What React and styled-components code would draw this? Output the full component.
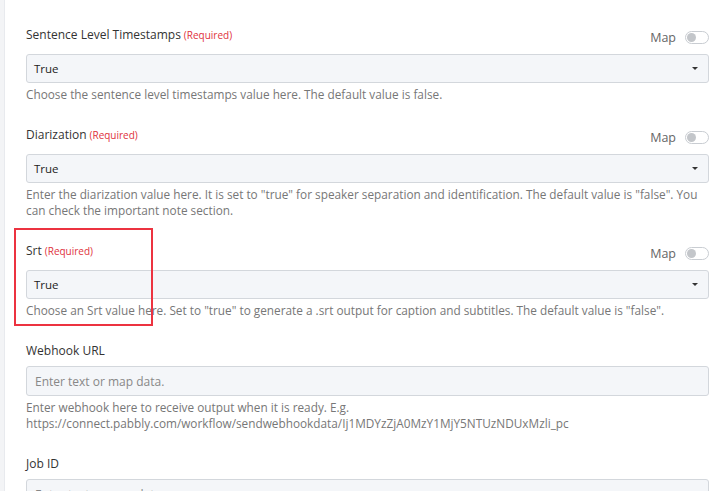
import React from "react";
import styled, { createGlobalStyle } from "styled-components";

const Global = createGlobalStyle`
  html, body { margin: 0; padding: 0; background: #fff; }
  body { font-family: "Open Sans", "Noto Sans", sans-serif; color: #333; }
`;

const Page = styled.div`
  display: flex;
  min-height: 491px;
`;

const SideRail = styled.div`
  width: 4px;
  flex: none;
  background: #f3f4f6;
  border-right: 1px solid #e8eaee;
`;

const Form = styled.div`
  flex: 1;
  padding: 26px 1px 0 21px;
  display: flex;
  flex-direction: column;
  gap: 24px;
`;

const Field = styled.div`
  position: relative;
  display: flex;
  flex-direction: column;
`;

const LabelRow = styled.div`
  display: flex;
  justify-content: space-between;
  align-items: flex-start;
  height: ${(p) => (p.$withMap ? "28px" : "24px")};
`;

const Label = styled.div`
  font-size: 12px;
  line-height: 18px;
  color: #333;
`;

const Required = styled.span`
  font-size: 10px;
  color: #e0323c;
  margin-left: 3px;
`;

const MapToggle = styled.div`
  display: flex;
  align-items: center;
  gap: 9px;
  margin-top: 3px;
  font-size: 12.5px;
  color: #666;
`;

const Switch = styled.span`
  position: relative;
  width: 22px;
  height: 11px;
  border: 1px solid #c9cdd2;
  border-radius: 7px;
  background: #fff;
  &::after {
    content: "";
    position: absolute;
    left: 1px;
    top: 1px;
    width: 9px;
    height: 9px;
    border-radius: 50%;
    background: #c3c6ca;
  }
`;

const Select = styled.div`
  display: flex;
  align-items: center;
  justify-content: space-between;
  height: 27px;
  padding: 0 10px 0 7px;
  background: #f4f6f9;
  border: 1px solid #d3d7dc;
  border-radius: 3px;
  font-size: 11.5px;
  color: #222;
`;

const Caret = styled.span`
  width: 0;
  height: 0;
  border-left: 3px solid transparent;
  border-right: 3px solid transparent;
  border-top: 3px solid #333;
`;

const TextInput = styled.div`
  display: flex;
  align-items: center;
  height: 28px;
  padding: 0 8px;
  background: #f4f6f9;
  border: 1px solid #d3d7dc;
  border-radius: 3px;
  font-size: 12px;
  color: #888;
`;

const Help = styled.div`
  margin-top: 3px;
  font-size: 11.8px;
  line-height: 16px;
  color: #777;
  padding-right: 4px;
  overflow-wrap: break-word;
`;

const Highlight = styled.div`
  position: absolute;
  left: -12px;
  top: -14px;
  width: 135px;
  height: 94px;
  border: 2px solid #ec3340;
  pointer-events: none;
`;

const SelectField = ({ label, help, highlight }) => (
  <Field>
    {highlight && <Highlight />}
    <LabelRow $withMap>
      <Label>
        {label}
        <Required>(Required)</Required>
      </Label>
      <MapToggle>
        Map
        <Switch />
      </MapToggle>
    </LabelRow>
    <Select>
      True
      <Caret />
    </Select>
    <Help>{help}</Help>
  </Field>
);

const InputField = ({ label, help }) => (
  <Field>
    <LabelRow>
      <Label>{label}</Label>
    </LabelRow>
    <TextInput>Enter text or map data.</TextInput>
    {help && <Help>{help}</Help>}
  </Field>
);

export default function App() {
  return (
    <>
      <Global />
      <Page>
        <SideRail />
        <Form>
          <SelectField
            label="Sentence Level Timestamps"
            help="Choose the sentence level timestamps value here. The default value is false."
          />
          <SelectField
            label="Diarization"
            help={
              'Enter the diarization value here. It is set to "true" for speaker separation and identification. The default value is "false". You can check the important note section.'
            }
          />
          <SelectField
            label="Srt"
            highlight
            help={
              'Choose an Srt value here. Set to "true" to generate a .srt output for caption and subtitles. The default value is "false".'
            }
          />
          <InputField
            label="Webhook URL"
            help={
              <>
                Enter webhook here to receive output when it is ready. E.g.
                <br />
                https://connect.pabbly.com/workflow/sendwebhookdata/Ij1MDYzZjA0MzY1MjY5NTUzNDUxMzli_pc
              </>
            }
          />
          <InputField label="Job ID" />
        </Form>
      </Page>
    </>
  );
}
